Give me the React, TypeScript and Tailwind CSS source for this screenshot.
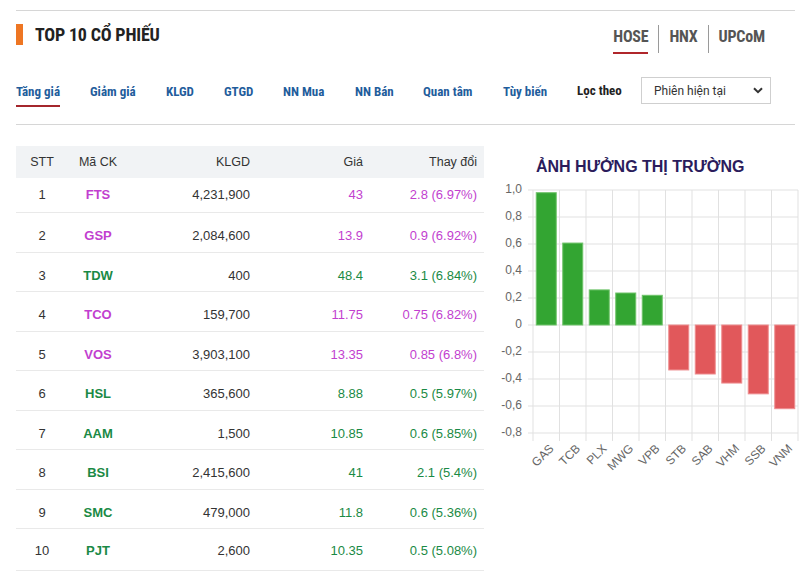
import React from 'react'

// Bảng top 10 cổ phiếu + biểu đồ ảnh hưởng thị trường
type Row = { stt: number; ma: string; klgd: string; gia: string; doi: string; tran: boolean }

const rows: Row[] = [
  { stt: 1, ma: 'FTS', klgd: '4,231,900', gia: '43', doi: '2.8 (6.97%)', tran: true },
  { stt: 2, ma: 'GSP', klgd: '2,084,600', gia: '13.9', doi: '0.9 (6.92%)', tran: true },
  { stt: 3, ma: 'TDW', klgd: '400', gia: '48.4', doi: '3.1 (6.84%)', tran: false },
  { stt: 4, ma: 'TCO', klgd: '159,700', gia: '11.75', doi: '0.75 (6.82%)', tran: true },
  { stt: 5, ma: 'VOS', klgd: '3,903,100', gia: '13.35', doi: '0.85 (6.8%)', tran: true },
  { stt: 6, ma: 'HSL', klgd: '365,600', gia: '8.88', doi: '0.5 (5.97%)', tran: false },
  { stt: 7, ma: 'AAM', klgd: '1,500', gia: '10.85', doi: '0.6 (5.85%)', tran: false },
  { stt: 8, ma: 'BSI', klgd: '2,415,600', gia: '41', doi: '2.1 (5.4%)', tran: false },
  { stt: 9, ma: 'SMC', klgd: '479,000', gia: '11.8', doi: '0.6 (5.36%)', tran: false },
  { stt: 10, ma: 'PJT', klgd: '2,600', gia: '10.35', doi: '0.5 (5.08%)', tran: false },
]

const tabs = [
  { label: 'Tăng giá', w: 'w-[74px]', active: true },
  { label: 'Giảm giá', w: 'w-[76px]' },
  { label: 'KLGD', w: 'w-[58px]' },
  { label: 'GTGD', w: 'w-[59px]' },
  { label: 'NN Mua', w: 'w-[72px]' },
  { label: 'NN Bán', w: 'w-[68px]' },
  { label: 'Quan tâm', w: 'w-[80px]' },
  { label: 'Tùy biến', w: 'w-[74px]' },
]

const bars = [
  { ma: 'GAS', v: 0.98 },
  { ma: 'TCB', v: 0.607 },
  { ma: 'PLX', v: 0.26 },
  { ma: 'MWG', v: 0.237 },
  { ma: 'VPB', v: 0.22 },
  { ma: 'STB', v: -0.333 },
  { ma: 'SAB', v: -0.363 },
  { ma: 'VHM', v: -0.43 },
  { ma: 'SSB', v: -0.51 },
  { ma: 'VNM', v: -0.62 },
]

const cond = { fontFamily: '"Roboto Condensed", "Liberation Sans Narrow", Roboto, sans-serif' }

function Chart() {
  const yv = (v: number) => 148 - 135 * v
  const x0 = 38
  const cw = 26.5
  const ticks = [1, 0.8, 0.6, 0.4, 0.2, 0, -0.2, -0.4, -0.6, -0.8]
  return (
    <svg width={310} height={300} className="block overflow-visible" style={{ fontFamily: '"Liberation Sans", Arial, sans-serif' }}>
      {ticks.map((t) => (
        <g key={t}>
          <line x1={33} x2={303} y1={yv(t)} y2={yv(t)} stroke="#e1e1e1" />
          <text x={27} y={yv(t)} textAnchor="end" dominantBaseline="middle" fontSize={12} fill="#666">
            {t === 0 ? '0' : t.toFixed(1).replace('.', ',')}
          </text>
        </g>
      ))}
      {Array.from({ length: 11 }).map((_, i) => (
        <line key={i} x1={x0 + i * cw} x2={x0 + i * cw} y1={yv(1)} y2={yv(-0.8) + 8} stroke="#e1e1e1" />
      ))}
      {bars.map((b, i) => {
        const cx = x0 + i * cw + cw / 2
        const top = b.v > 0 ? yv(b.v) : yv(0)
        const h = Math.abs(yv(b.v) - yv(0))
        return (
          <g key={b.ma}>
            <rect
              x={cx - 10}
              y={top}
              width={20}
              height={h}
              fill={b.v > 0 ? '#33a532' : '#e1585b'}
              stroke={b.v > 0 ? '#6fc36a' : '#ee8d8f'}
              strokeWidth={1}
            />
            <text
              x={cx + 6}
              y={270}
              textAnchor="end"
              dominantBaseline="middle"
              fontSize={12}
              fill="#666"
              transform={`rotate(-45 ${cx + 6} 270)`}
            >
              {b.ma}
            </text>
          </g>
        )
      })}
    </svg>
  )
}

export default function App() {
  return (
    <div className="w-[805px] h-[583px] overflow-hidden bg-white pl-[16px] pr-[10px]" style={{ fontFamily: '"Liberation Sans", Arial, sans-serif' }}>
      <div className="mt-[10px] border-t border-[#d6d6d6]" />

      {/* tiêu đề + sàn */}
      <div className="flex items-start justify-between pt-[13px]">
        <div className="flex items-center h-[21px]">
          <div className="w-[7px] h-[21px] bg-[#ee7623]" />
          <div className="ml-[12px] text-[18px] font-bold text-[#222] tracking-[-0.2px]" style={cond}>
            TOP 10 CỔ PHIẾU
          </div>
        </div>
        <div className="flex mt-[1px] pr-[20px]" style={cond}>
          {['HOSE', 'HNX', 'UPCoM'].map((m, i) => (
            <div key={m} className={'h-[28px] px-[10px] ' + (i > 0 ? 'border-l border-[#9a9a9a]' : '')}>
              <span
                className={
                  'inline-block pt-[1px] leading-[20px] pb-[5px] text-[16px] font-bold text-[#555] tracking-[-0.2px] ' +
                  (i === 0 ? 'border-b-2 border-[#b0262b]' : '')
                }
              >
                {m}
              </span>
            </div>
          ))}
        </div>
      </div>

      {/* tab lọc */}
      <div className="flex items-start mt-[26px]">
        {tabs.map((t) => (
          <div key={t.label} className={t.w + ' shrink-0'}>
            <span
              className={
                'inline-block leading-[20px] pt-[1px] pb-[3px] text-[13px] font-bold text-[#1f5d9c] ' +
                (t.active ? 'border-b-2 border-[#a4262c]' : '')
              }
              style={cond}
            >
              {t.label}
            </span>
          </div>
        ))}
        <div className="w-[64px] shrink-0 pt-[2px] leading-[20px] text-[13px] font-bold text-[#222]" style={cond}>
          Lọc theo
        </div>
        <div
          className="w-[130px] h-[27px] -mt-[2px] border border-[#cfcfcf] flex items-center justify-between pl-[12px] pr-[7px] text-[12px] text-[#333]"
          style={{ fontFamily: 'Roboto, sans-serif' }}
        >
          <span>Phiên hiện tại</span>
          <svg width="10" height="7" viewBox="0 0 10 7">
            <path d="M1 1.2 L5 5.2 L9 1.2" fill="none" stroke="#333" strokeWidth="2" />
          </svg>
        </div>
      </div>

      <div className="mt-[17px] border-t border-[#d6d6d6]" />

      <div className="flex mt-[21px]">
        {/* bảng */}
        <div className="w-[468px] shrink-0 text-[13px] text-[#333]">
          <div className="grid grid-cols-[52px_60px_122px_113px_114px] pr-[7px] h-[32px] items-center bg-[#f1f3f5] text-[12.5px] text-[#333]">
            <div className="text-center">STT</div>
            <div className="text-center">Mã CK</div>
            <div className="text-right">KLGD</div>
            <div className="text-right">Giá</div>
            <div className="text-right">Thay đổi</div>
          </div>
          {rows.map((r, i) => {
            const c = r.tran ? 'text-[#c23fcf]' : 'text-[#1a8a45]'
            return (
              <div
                key={r.stt}
                className={
                  'grid grid-cols-[52px_60px_122px_113px_114px] pr-[7px] items-center border-b border-[#e9e9e9] ' +
                  (i === 0 ? 'h-[35px]' : i === 9 ? 'h-[42px] pt-[2px]' : 'h-[39.5px] pt-[7px]')
                }
              >
                <div className="text-center">{r.stt}</div>
                <div className={'text-center font-bold ' + c}>{r.ma}</div>
                <div className="text-right">{r.klgd}</div>
                <div className={'text-right ' + c}>{r.gia}</div>
                <div className={'text-right ' + c}>{r.doi}</div>
              </div>
            )
          })}
        </div>

        {/* biểu đồ */}
        <div className="flex-1 ml-[11px]">
          <div className="mt-[11px] pl-[41px] leading-[20px] text-[16px] font-bold text-[#2b1c5c] whitespace-nowrap">
            ẢNH HƯỞNG THỊ TRƯỜNG
          </div>
          <Chart />
        </div>
      </div>
    </div>
  )
}
